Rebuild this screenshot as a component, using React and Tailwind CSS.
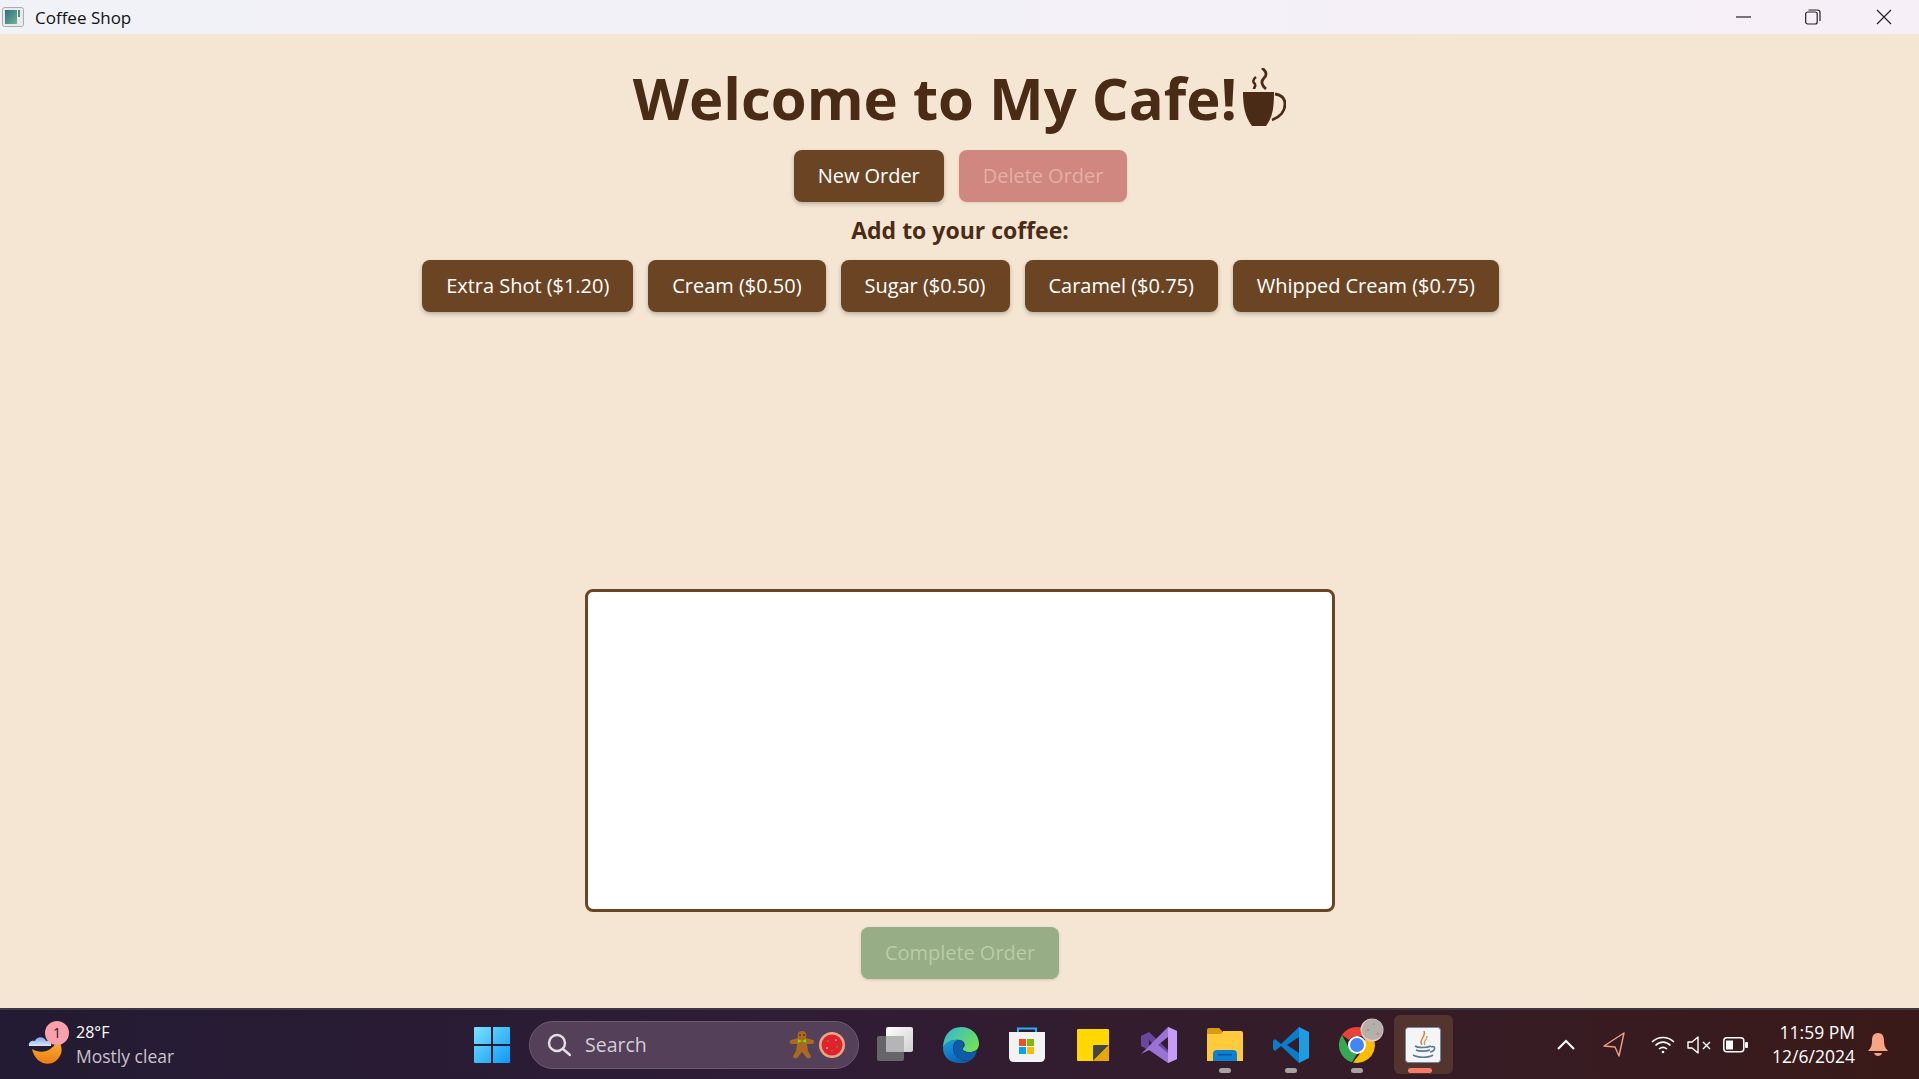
const font = { fontFamily: '"Open Sans", sans-serif' };

function WindowIcon() {
  return (
    <svg width="22" height="20" viewBox="0 0 22 20">
      <defs>
        <linearGradient id="wi" x1="0" y1="0" x2="1" y2="1">
          <stop offset="0" stopColor="#2f6f86" />
          <stop offset="1" stopColor="#6fb58c" />
        </linearGradient>
      </defs>
      <rect x="0.5" y="0.5" width="21" height="19" rx="2" fill="#e8eaee" stroke="#a9adb3" />
      <rect x="3" y="3" width="12" height="14" fill="url(#wi)" />
      <rect x="16" y="3" width="2" height="7" fill="#5d8b78" />
    </svg>
  );
}

function Cup() {
  return (
    <svg width="43" height="58" viewBox="0 0 43 58" className="ml-[6px] -mt-[2px]">
      <path d="M13 9 C9 12 10 14 12 16 C13 18 11 20 11 21" fill="none" stroke="#4a2c16" strokeWidth="2.6" />
      <path d="M19 0 C24 4 24 7 21 10 C18 13 18 17 23 21" fill="none" stroke="#4a2c16" strokeWidth="2.8" />
      <path d="M0 24 H31 C31 38 30 49 23 58 H9 C2 49 0 38 0 24 Z" fill="#4a2c16" />
      <path d="M32 26 C39 27 42 31 42 36 C42 43 37 49 29 52" fill="none" stroke="#4a2c16" strokeWidth="2.8" />
    </svg>
  );
}

function ActionButton({ children, className = "bg-[#6b4423] text-white shadow-[0_2px_4px_rgba(0,0,0,0.25)]" }) {
  return <button className={"h-[52px] px-6 rounded-lg text-[20px] tracking-[-0.03px] " + className}>{children}</button>;
}

function MoonWeather() {
  return (
    <svg width="38" height="40" viewBox="0 0 38 40">
      <defs>
        <linearGradient id="mw" x1="0" y1="0" x2="0" y2="1">
          <stop offset="0" stopColor="#f7b733" />
          <stop offset="1" stopColor="#ee7b14" />
        </linearGradient>
        <linearGradient id="cw" x1="0" y1="0" x2="0" y2="1">
          <stop offset="0" stopColor="#7fa7ef" />
          <stop offset="1" stopColor="#dce6fb" />
        </linearGradient>
      </defs>
      <path d="M4 24 C14 30 25 26 30 14 C35 22 35 29 29 35 C20 43 7 38 4 24 Z" fill="url(#mw)" />
      <path d="M1 21 C0 17 4 15 7 16 C9 11 16 11 18 16 C22 15 24 18 23 21 Z" fill="url(#cw)" />
    </svg>
  );
}

function WinLogo() {
  return (
    <svg width="36" height="36" viewBox="0 0 36 36">
      <defs>
        <linearGradient id="wl" x1="0" y1="0" x2="1" y2="1">
          <stop offset="0" stopColor="#7be3fd" />
          <stop offset="1" stopColor="#0a98f5" />
        </linearGradient>
      </defs>
      <path d="M1 0 H17 V17 H0 V1 Q0 0 1 0 Z M19 0 H35 Q36 0 36 1 V17 H19 Z M0 19 H17 V36 H1 Q0 36 0 35 Z M19 19 H36 V35 Q36 36 35 36 H19 Z" fill="url(#wl)" />
    </svg>
  );
}

function Gingerbread() {
  return (
    <svg width="26" height="28" viewBox="0 0 26 28">
      <path d="M13 0 C17 0 18 3 17 7 L24 9 C26 10 25 13 23 13 L18 13 L19 20 L22 25 C22 28 18 28 17 26 L13 21 L9 26 C8 28 4 28 4 25 L7 20 L8 13 L3 13 C0 13 0 10 2 9 L9 7 C8 3 9 0 13 0 Z" fill="#a9691f" />
      <path d="M9 8 L13 10 L17 8 V12 L13 10 L9 12 Z" fill="#7ed321" />
      <circle cx="13" cy="14" r="1" fill="#d84a2a" />
      <circle cx="13" cy="18" r="1" fill="#d84a2a" />
      <circle cx="11" cy="4" r="0.8" fill="#3a2010" />
      <circle cx="15" cy="4" r="0.8" fill="#3a2010" />
    </svg>
  );
}

function Cookie() {
  return (
    <svg width="26" height="26" viewBox="0 0 26 26">
      <circle cx="13" cy="13" r="13" fill="#e8a888" />
      <circle cx="13" cy="13" r="10.5" fill="#e3202c" />
      <circle cx="9" cy="9" r="0.9" fill="#3fa33a" />
      <circle cx="17" cy="8" r="0.9" fill="#f4b6b6" />
      <circle cx="18" cy="15" r="0.9" fill="#3fa33a" />
      <circle cx="8" cy="16" r="0.9" fill="#f4b6b6" />
      <circle cx="13" cy="19" r="0.9" fill="#3fa33a" />
    </svg>
  );
}

function TaskView() {
  return (
    <svg width="36" height="36" viewBox="0 0 36 36">
      <defs>
        <linearGradient id="tv" x1="0" y1="0" x2="1" y2="1">
          <stop offset="0" stopColor="#ffffff" />
          <stop offset="1" stopColor="#cfcfcf" />
        </linearGradient>
      </defs>
      <rect x="9" y="0" width="27" height="25" rx="2" fill="url(#tv)" />
      <rect x="0" y="9" width="27" height="25" rx="2" fill="#6b6b6b" fillOpacity="0.92" />
      <rect x="9" y="9" width="18" height="16" rx="1" fill="#b5b5b5" />
    </svg>
  );
}

function Edge() {
  return (
    <svg width="36" height="36" viewBox="0 0 36 36">
      <defs>
        <linearGradient id="e1" x1="0" y1="0" x2="1" y2="0.6">
          <stop offset="0" stopColor="#2fb4d8" />
          <stop offset="1" stopColor="#6fe05c" />
        </linearGradient>
        <linearGradient id="e2" x1="0" y1="0" x2="0.5" y2="1">
          <stop offset="0" stopColor="#1aa0dc" />
          <stop offset="1" stopColor="#0a62b8" />
        </linearGradient>
      </defs>
      <path d="M18 0 C28 0 36 7 36 17 C36 23 31 25 27 25 C22 25 19 23 20 21 C23 19 22 14 17 13 C10 12 3 15 0 21 C0 9 7 0 18 0 Z" fill="url(#e1)" />
      <path d="M0 21 C3 14 10 12 15 13 C9 15 9 24 13 29 C16 33 23 35 28 33 C24 36 20 36 17 36 C7 36 0 30 0 21 Z" fill="url(#e2)" />
      <path d="M15 13 C20 13 22 16 20 21 C19 24 23 26 28 25 C31 25 33 24 34 23 C33 28 31 31 28 33 C23 35 16 33 13 29 C9 24 10 15 15 13 Z" fill="#0c5ca8" />
    </svg>
  );
}

function Store() {
  return (
    <svg width="36" height="36" viewBox="0 0 36 36">
      <path d="M9 6 V1.5 H27 V6" fill="none" stroke="#25b0f0" strokeWidth="2.2" />
      <path d="M0 5 H36 V30 Q36 35 31 35 H5 Q0 35 0 30 Z" fill="#f3f3f3" />
      <rect x="10" y="12" width="7" height="7" fill="#f25022" />
      <rect x="18" y="12" width="7" height="7" fill="#7fba00" />
      <rect x="10" y="20" width="7" height="7" fill="#00a4ef" />
      <rect x="18" y="20" width="7" height="7" fill="#ffb900" />
    </svg>
  );
}

function Sticky() {
  return (
    <svg width="32" height="32" viewBox="0 0 32 32">
      <path d="M1 0 H31 Q32 0 32 1 V31 Q32 32 31 32 H1 Q0 32 0 31 V1 Q0 0 1 0 Z" fill="#ffd800" />
      <path d="M16 32 L16 17 Q16 16 17 16 H32 Z" fill="#444444" />
      <path d="M16 32 L32 16 V31 Q32 32 31 32 Z" fill="#e8a800" />
    </svg>
  );
}

function VisualStudio() {
  return (
    <svg width="36" height="36" viewBox="0 0 36 36">
      <path d="M0 9 L8 5 L27 23 V32 L8 13 L8 23 L0 19 Z" fill="#6a479f" />
      <path d="M0 27 L27 0 L36 4 V32 L27 36 L8 23 L0 27 Z M27 10 L17 18 L27 26 Z" fill="#9b73d6" />
      <path d="M27 0 L36 4 V32 L27 36 Z" fill="#c69bf5" />
    </svg>
  );
}

function Folder() {
  return (
    <svg width="36" height="34" viewBox="0 0 36 34">
      <path d="M0 2 Q0 0 2 0 H12 L15 3 H15 L15 6 H0 Z" fill="#d99c10" />
      <path d="M0 6 L14 6 L16 3 H34 Q36 3 36 5 V33 H0 Z" fill="#ffcb3d" />
      <path d="M6 33 V26 Q6 22 10 22 H26 Q30 22 30 26 V33 Z" fill="#0f7fd6" />
      <rect x="11" y="26" width="14" height="1.4" fill="#0a4f8f" />
    </svg>
  );
}

function VSCode() {
  return (
    <svg width="36" height="36" viewBox="0 0 36 36">
      <path d="M26 0 L36 5 V31 L26 36 L26 26 L26 10 Z" fill="#1b9de2" />
      <path d="M26 0 L8 17 L2 12 L0 14 V22 L2 24 L8 19 L26 36 V26 L14 18 L26 10 Z" fill="#0a7cc8" />
    </svg>
  );
}

function Chrome() {
  return (
    <svg width="36" height="36" viewBox="0 0 36 36">
      <path d="M18 0 A18 18 0 0 1 33.6 9 H18 A9 9 0 0 0 10 13 L3 8 A18 18 0 0 1 18 0 Z" fill="#ea4335" />
      <path d="M3 8 L10 21 A9 9 0 0 0 18 27 L13 35.3 A18 18 0 0 1 3 8 Z" fill="#34a853" />
      <path d="M33.6 9 A18 18 0 0 1 14 35.5 L23 24 A9 9 0 0 0 25 13 Z" fill="#fbbc04" />
      <circle cx="18" cy="18" r="9" fill="#ffffff" />
      <circle cx="18" cy="18" r="7" fill="#4285f4" />
    </svg>
  );
}

function MoonBadge() {
  return (
    <svg width="24" height="24" viewBox="0 0 24 24">
      <circle cx="12" cy="12" r="11.5" fill="#f0c8c8" />
      <circle cx="12.5" cy="11.5" r="10.5" fill="#b4afaa" />
      <circle cx="18" cy="16" r="1.4" fill="#c88a8a" />
      <circle cx="8" cy="12" r="1" fill="#8f8a86" />
      <circle cx="14" cy="6" r="0.8" fill="#8f8a86" />
    </svg>
  );
}

function JavaIcon() {
  return (
    <svg width="36" height="36" viewBox="0 0 36 36">
      <rect x="0.5" y="0.5" width="35" height="35" rx="3" fill="#f3f5f7" stroke="#6f8aa0" />
      <path d="M19 4 C22 9 14 12 17 18 C13 14 20 10 19 4 Z" fill="#e0742a" stroke="#e0742a" strokeWidth="0.8" />
      <path d="M22 9 C23 12 18 14 20 18 C17 15 22 13 22 9 Z" fill="#e0742a" stroke="#e0742a" strokeWidth="0.6" />
      <path d="M10 19 C13 21 22 21 26 19 M11 23 C14 24.5 21 24.5 25 23 M8 28 C13 31 24 31 28 28 M26 20 C31 18 31 24 25 25" fill="none" stroke="#587a94" strokeWidth="1.6" />
    </svg>
  );
}

function TaskItem({ children }) {
  return <div className="w-[66px] h-full flex items-center justify-center">{children}</div>;
}

function Dot() {
  return <div className="absolute left-[27px] bottom-[6px] w-[12px] h-[5px] rounded-full bg-[#a8a2a4]" />;
}

export default function App() {
  return (
    <div style={font} className="w-[1919px] h-[1079px] flex flex-col overflow-hidden bg-[#f5e6d3]">
      <header className="h-[34px] shrink-0 flex items-center bg-gradient-to-r from-[#f1f1f8] via-[#f3f1f8] to-[#f7eff7]">
        <div className="ml-[2px] flex items-center">
          <WindowIcon />
        </div>
        <span className="ml-[11px] pt-[2px] text-[17px] text-[#111]">Coffee Shop</span>
        <div className="ml-auto flex items-center h-full text-[#111]">
          <svg width="16" height="16" viewBox="0 0 16 16" className="mr-[53px]"><path d="M0 8 H15" stroke="#222" strokeWidth="1.2" /></svg>
          <svg width="16" height="16" viewBox="0 0 16 16" className="mr-[55px]">
            <rect x="0.7" y="3" width="11.5" height="12" rx="2" fill="none" stroke="#222" strokeWidth="1.2" />
            <path d="M3.5 1 H12.5 Q15 1 15 3.5 V12" fill="none" stroke="#222" strokeWidth="1.2" />
          </svg>
          <svg width="16" height="16" viewBox="0 0 16 16" className="mr-[27px]"><path d="M1 1 L15 15 M15 1 L1 15" stroke="#222" strokeWidth="1.2" /></svg>
        </div>
      </header>

      <main className="flex-1 flex flex-col items-center">
        <div className="mt-[20px] h-[88px] flex items-center justify-center">
          <h1 className="text-[58px] leading-none font-bold text-[#4a2c16]">Welcome to My Cafe!</h1>
          <Cup />
        </div>
        <div className="mt-[8px] ml-[2px] flex gap-[15px] items-start">
          <ActionButton>New Order</ActionButton>
          <ActionButton className="bg-[#d0877f] text-[#e5aea6] shadow-[0_1px_3px_rgba(0,0,0,0.1)]">Delete Order</ActionButton>
        </div>
        <div className="mt-[9px] ml-[1px] text-[23px] leading-[38px] font-bold text-[#4a2c16]">Add to your coffee:</div>
        <div className="mt-[11px] ml-[2px] flex gap-[15px]">
          <ActionButton>Extra Shot ($1.20)</ActionButton>
          <ActionButton>Cream ($0.50)</ActionButton>
          <ActionButton>Sugar ($0.50)</ActionButton>
          <ActionButton>Caramel ($0.75)</ActionButton>
          <ActionButton>Whipped Cream ($0.75)</ActionButton>
        </div>
        <div className="mt-[277px] w-[750px] h-[323px] bg-white border-[3px] border-[#6b4423] rounded-lg" />
        <ActionButton className="mt-[15px] ml-[1px] bg-[#96ad85] text-[#b9cca6] shadow-[0_1px_3px_rgba(0,0,0,0.15)]">Complete Order</ActionButton>
      </main>

      <footer className="h-[71px] shrink-0 flex items-center border-t-2 border-[#3e3640] bg-gradient-to-r from-[#231b33] via-[#2f1c36] via-40% to-[#3a1a18] text-white relative">
        <div className="w-[459px] shrink-0 pl-[28px] flex items-center h-full">
          <div className="relative w-[38px] h-[40px]">
            <MoonWeather />
            <div className="absolute left-[17px] top-[-4px] w-[24px] h-[24px] rounded-full bg-[#f9a0ab] flex items-center justify-center text-[14px] text-[#222]">1</div>
          </div>
          <div className="ml-[10px] flex flex-col text-[16px] leading-[24px] -mt-[2px]">
            <span className="text-white">28°F</span>
            <span className="text-[#c8c4cc] text-[17.5px]">Mostly clear</span>
          </div>
        </div>
        <TaskItem><WinLogo /></TaskItem>
        <div className="ml-[4px] w-[330px] h-[48px] shrink-0 rounded-full bg-[#55405a] border border-[#6b5a70] flex items-center pl-[17px] pr-[13px]">
          <svg width="24" height="24" viewBox="0 0 24 24" fill="none" stroke="#e4e0e6" strokeWidth="2.4">
            <circle cx="10" cy="10" r="8" />
            <path d="M16 16 L23 22" strokeLinecap="round" />
          </svg>
          <span className="ml-[14px] text-[19.5px] text-[#d4ced6]">Search</span>
          <div className="ml-auto flex items-center gap-[4px]">
            <Gingerbread />
            <Cookie />
          </div>
        </div>
        <div className="ml-[3px] flex items-center h-full">
          <TaskItem><TaskView /></TaskItem>
          <TaskItem><Edge /></TaskItem>
          <TaskItem><Store /></TaskItem>
          <TaskItem><Sticky /></TaskItem>
          <TaskItem><VisualStudio /></TaskItem>
          <div className="relative h-full"><TaskItem><Folder /></TaskItem><Dot /></div>
          <div className="relative h-full"><TaskItem><VSCode /></TaskItem><Dot /></div>
          <div className="relative h-full">
            <TaskItem><Chrome /></TaskItem>
            <Dot />
            <div className="absolute left-[36px] top-[8px]"><MoonBadge /></div>
          </div>
          <div className="relative h-full">
            <TaskItem>
              <div className="w-[59px] h-[59px] rounded-md bg-[#54342f] flex items-center justify-center"><JavaIcon /></div>
            </TaskItem>
            <div className="absolute left-[18px] bottom-[6px] w-[24px] h-[5px] rounded-full bg-[#f47c66]" />
          </div>
        </div>
        <div className="ml-[100px] flex items-center text-white">
          <svg width="20" height="12" viewBox="0 0 20 12" fill="none" stroke="#fff" strokeWidth="2"><path d="M2 10 L10 2 L18 10" /></svg>
          <svg width="22" height="25" viewBox="0 0 22 25" fill="none" stroke="#f0a080" strokeWidth="1.4" className="ml-[27px]"><path d="M21 1 L1 14 L12 15 L16 24 Z" strokeLinejoin="round" /></svg>
          <svg width="24" height="18" viewBox="0 0 24 18" fill="none" stroke="#fff" strokeWidth="1.6" className="ml-[26px]">
            <path d="M1 6 C7 0 17 0 23 6 M4.5 9.5 C9 5 15 5 19.5 9.5 M8 13 C10.5 11 13.5 11 16 13" />
            <circle cx="12" cy="16" r="1.3" fill="#fff" stroke="none" />
          </svg>
          <svg width="24" height="20" viewBox="0 0 24 20" fill="none" stroke="#fff" strokeWidth="1.4" className="ml-[12px]">
            <path d="M1 7 H5 L11 2 V18 L5 13 H1 Z" strokeLinejoin="round" />
            <path d="M16 7 L23 14 M23 7 L16 14" />
          </svg>
          <svg width="25" height="16" viewBox="0 0 25 16" fill="none" className="ml-[12px]">
            <rect x="0.8" y="0.8" width="20" height="14" rx="3" stroke="#fff" strokeWidth="1.5" />
            <rect x="3" y="3.5" width="7" height="9" fill="#fff" />
            <rect x="22" y="5" width="3" height="6" rx="1" fill="#fff" />
          </svg>
        </div>
        <div className="ml-[29px] w-[78px] flex flex-col items-end text-[17.5px] leading-[24px] whitespace-nowrap -mt-[2px]">
          <span>11:59 PM</span>
          <span>12/6/2024</span>
        </div>
        <svg width="20" height="24" viewBox="0 0 20 24" className="ml-[13px]" fill="#f7a582">
          <path d="M10 0 C15 0 16 4 16 8 C16 12 17 15 20 18 H0 C3 15 4 12 4 8 C4 4 5 0 10 0 Z" />
          <path d="M6 20 H14 C13 24 7 24 6 20 Z" />
        </svg>
      </footer>
    </div>
  );
}
